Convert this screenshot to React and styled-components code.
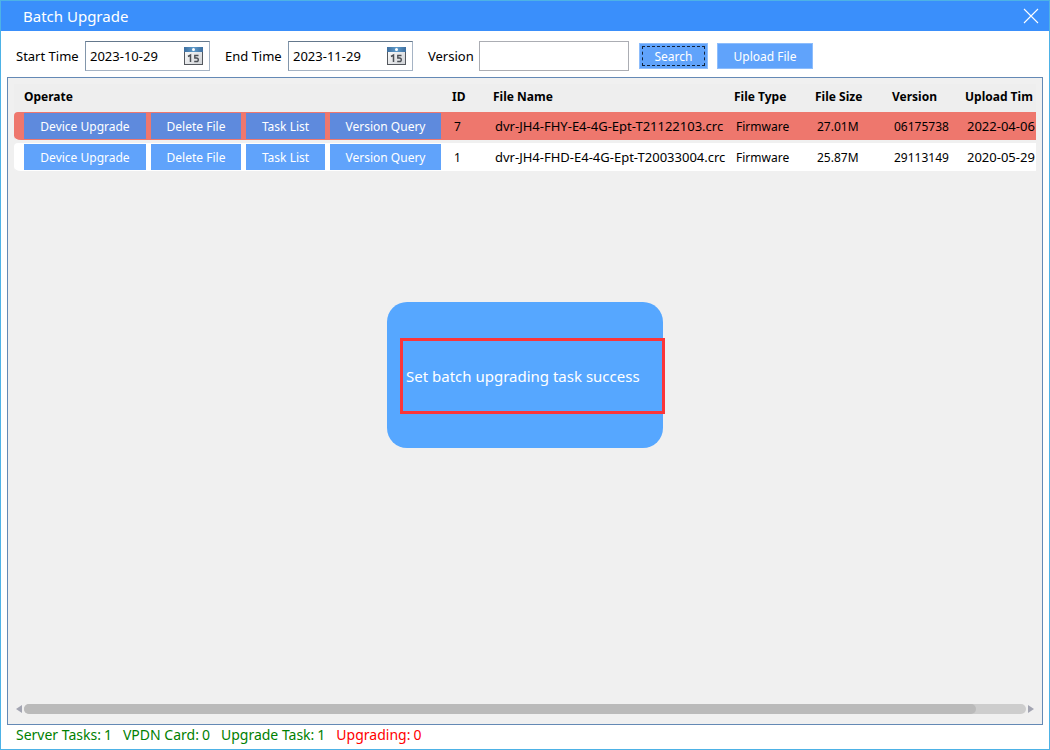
import React from 'react';
import styled, { createGlobalStyle } from 'styled-components';

const FILES = [
  {
    id: 7,
    name: 'dvr-JH4-FHY-E4-4G-Ept-T21122103.crc',
    type: 'Firmware',
    size: '27.01M',
    version: '06175738',
    uploaded: '2022-04-06',
    selected: true,
  },
  {
    id: 1,
    name: 'dvr-JH4-FHD-E4-4G-Ept-T20033004.crc',
    type: 'Firmware',
    size: '25.87M',
    version: '29113149',
    uploaded: '2020-05-29',
  },
];

const ACTIONS = [
  { label: 'Device Upgrade', width: 122 },
  { label: 'Delete File', width: 90 },
  { label: 'Task List', width: 79 },
  { label: 'Version Query', width: 111 },
];

const COLUMNS = [
  { label: 'Operate', width: 432 },
  { label: 'ID', width: 41 },
  { label: 'File Name', width: 241 },
  { label: 'File Type', width: 81 },
  { label: 'File Size', width: 77 },
  { label: 'Version', width: 73 },
  { label: 'Upload Tim', width: 128 },
];

const CalendarIcon = () => (
  <svg width="20" height="20" viewBox="0 0 20 20" aria-hidden="true">
    <defs>
      <linearGradient id="calTop" x1="0" y1="0" x2="1" y2="0">
        <stop offset="0" stopColor="#3f6f9f" />
        <stop offset="0.5" stopColor="#5d9bcb" />
        <stop offset="1" stopColor="#3f6f9f" />
      </linearGradient>
      <linearGradient id="calPage" x1="0" y1="0" x2="1" y2="1">
        <stop offset="0" stopColor="#ffffff" />
        <stop offset="1" stopColor="#cfd2d6" />
      </linearGradient>
    </defs>
    <rect x="0.5" y="1.5" width="18" height="17" fill="url(#calPage)" stroke="#54585e" />
    <rect x="0" y="1" width="19" height="5" fill="url(#calTop)" />
    <circle cx="9.5" cy="3.5" r="1.5" fill="#fff" />
    <path d="M4 10.5L6.5 9V16" fill="none" stroke="#4b4f55" strokeWidth="1.5" />
    <path
      d="M14.5 9.5H10.8V12H12.5Q14.3 12 14.3 13.8T12.5 15.5H10.2"
      fill="none"
      stroke="#4b4f55"
      strokeWidth="1.4"
    />
  </svg>
);

const DateField = ({ id, label, width, value }) => (
  <Field>
    <Label htmlFor={id} $width={width}>
      {label}
    </Label>
    <DateBox>
      <DateInput id={id} type="text" defaultValue={value} />
      <IconButton type="button" aria-label={`Pick ${label}`}>
        <CalendarIcon />
      </IconButton>
    </DateBox>
  </Field>
);

const App = () => (
  <Window>
    <GlobalStyle />
    <TitleBar>
      <Title>Batch Upgrade</Title>
      <IconButton type="button" aria-label="Close">
        <svg width="16" height="16" viewBox="0 0 16 16" aria-hidden="true">
          <path d="M1 1L15 15M15 1L1 15" stroke="#fff" strokeWidth="1.1" />
        </svg>
      </IconButton>
    </TitleBar>

    <Toolbar>
      <DateField id="start" label="Start Time" width={64} value="2023-10-29" />
      <DateField id="end" label="End Time" width={58} value="2023-11-29" />
      <Field>
        <Label htmlFor="version" $width={46}>
          Version
        </Label>
        <TextInput id="version" type="text" />
      </Field>
      <ToolbarButtons>
        <ToolButton type="button" $width={69} $focused>
          Search
        </ToolButton>
        <ToolButton type="button" $width={96}>
          Upload File
        </ToolButton>
      </ToolbarButtons>
    </Toolbar>

    <Panel>
      <TableArea>
        <Table>
          <colgroup>
            {COLUMNS.map(col => (
              <Col key={col.label} $width={col.width} />
            ))}
          </colgroup>
          <thead>
            <tr>
              {COLUMNS.map(col => (
                <HeadCell key={col.label}>{col.label}</HeadCell>
              ))}
            </tr>
          </thead>
          <tbody>
            {FILES.map(file => (
              <Row key={file.id} $selected={file.selected}>
                <Cell>
                  <Actions>
                    {ACTIONS.map(action => (
                      <ActionButton
                        key={action.label}
                        type="button"
                        $width={action.width}
                        $selected={file.selected}
                      >
                        {action.label}
                      </ActionButton>
                    ))}
                  </Actions>
                </Cell>
                <Cell>{file.id}</Cell>
                <Cell $large>{file.name}</Cell>
                <Cell>{file.type}</Cell>
                <Cell>{file.size}</Cell>
                <Cell>{file.version}</Cell>
                <Cell $large>{file.uploaded}</Cell>
              </Row>
            ))}
          </tbody>
        </Table>
      </TableArea>
      <ScrollBar>
        <svg width="6" height="8" viewBox="0 0 6 8" aria-hidden="true">
          <path d="M6 0V8L0 4Z" fill="#a3a5b2" />
        </svg>
        <ScrollTrack>
          <ScrollThumb />
        </ScrollTrack>
        <svg width="6" height="8" viewBox="0 0 6 8" aria-hidden="true">
          <path d="M0 0V8L6 4Z" fill="#a3a5b2" />
        </svg>
      </ScrollBar>
    </Panel>

    <StatusBar>
      <Status>
        <span>Server Tasks:</span>
        <span>1</span>
      </Status>
      <Status>
        <span>VPDN Card:</span>
        <span>0</span>
      </Status>
      <Status>
        <span>Upgrade Task:</span>
        <span>1</span>
      </Status>
      <Status $alert>
        <span>Upgrading:</span>
        <span>0</span>
      </Status>
    </StatusBar>

    <Toast role="status">
      <ToastMessage>Set batch upgrading task success</ToastMessage>
    </Toast>
  </Window>
);

export default App;

const GlobalStyle = createGlobalStyle`
  * {
    box-sizing: border-box;
  }
  body {
    margin: 0;
    font-family: 'Noto Sans', 'Open Sans', sans-serif;
    font-size: 12px;
    color: #000;
  }
  button,
  input {
    font: inherit;
    margin: 0;
  }
`;

const Window = styled.div`
  display: flex;
  flex-direction: column;
  min-height: 100vh;
  border: 1px solid #4db2e6;
  background: #fff;
`;

const TitleBar = styled.header`
  display: flex;
  align-items: center;
  justify-content: space-between;
  height: 30px;
  padding: 0 10px 0 22px;
  background: #3a8ffb;
`;

const Title = styled.h1`
  margin: 0;
  font-size: 15px;
  font-weight: 400;
  color: #fff;
`;

const IconButton = styled.button`
  display: flex;
  padding: 0;
  border: 0;
  background: none;
`;

const Toolbar = styled.div`
  display: flex;
  align-items: center;
  gap: 15px;
  padding: 10px 15px 6px;
`;

const Field = styled.div`
  display: flex;
  align-items: center;
  gap: 5px;
`;

const Label = styled.label`
  width: ${props => props.$width}px;
  font-size: 13px;
  white-space: nowrap;
`;

const DateBox = styled.div`
  display: flex;
  align-items: center;
  width: 125px;
  height: 30px;
  padding: 0 5px 0 4px;
  border: 1px solid;
  border-color: #64788c #a5b3c4 #a5b3c4 #8296ab;
  background: #fff;
`;

const DateInput = styled.input`
  flex: 1;
  min-width: 0;
  padding: 0;
  border: 0;
  outline: 0;
  background: none;
  font-size: 13px;
`;

const TextInput = styled.input`
  width: 150px;
  height: 30px;
  padding: 0 4px;
  border: 1px solid #abadb3;
  outline: 0;
`;

const ToolbarButtons = styled.div`
  display: flex;
  gap: 9px;
  margin-left: -5px;
`;

const Button = styled.button`
  width: ${props => props.$width}px;
  height: 26px;
  padding: 0;
  border: 0;
  color: #fff;
  background: #60a3fb;
  white-space: nowrap;
`;

const ToolButton = styled(Button)`
  border: 1px solid #8dbdfc;
  outline: ${props => (props.$focused ? '1px dashed #12233a' : 'none')};
  outline-offset: -4px;
`;

const ActionButton = styled(Button)`
  background: ${props => (props.$selected ? '#5e8add' : '#60a3fb')};
`;

const Panel = styled.main`
  display: flex;
  flex: 1;
  flex-direction: column;
  justify-content: space-between;
  margin: 0 6px;
  padding: 6px;
  border: 1px solid #6489b5;
  background: #f0f0f0;
`;

const TableArea = styled.div`
  overflow: hidden;
`;

const Table = styled.table`
  width: 1073px;
  table-layout: fixed;
  border-collapse: separate;
  border-spacing: 0;
`;

const Col = styled.col`
  width: ${props => props.$width}px;
`;

const HeadCell = styled.th`
  height: 28px;
  padding: 0 0 3px 6px;
  text-align: left;
  font-weight: 700;
  white-space: nowrap;
  background: #eee;
  &:first-child {
    padding-left: 10px;
  }
`;

const Cell = styled.td`
  height: 31px;
  padding: 1px 0 1px 8px;
  font-size: ${props => (props.$large ? 13 : 12)}px;
  white-space: nowrap;
  border-bottom: 3px solid #f0f0f0;
  &:first-child {
    padding-left: 10px;
    border-radius: 4px 0 0 7px;
  }
`;

const Row = styled.tr`
  ${Cell} {
    background: ${props => (props.$selected ? '#ee776d' : '#fff')};
  }
`;

const Actions = styled.div`
  display: flex;
  gap: 5px;
`;

const ScrollBar = styled.div`
  display: flex;
  align-items: center;
  gap: 2px;
  padding: 0 2px 4px;
`;

const ScrollTrack = styled.div`
  flex: 1;
  height: 10px;
  border-radius: 5px;
  background: #cdcdcd;
`;

const ScrollThumb = styled.div`
  width: 95%;
  height: 10px;
  border-radius: 5px;
  background: #bababa;
`;

const StatusBar = styled.footer`
  display: flex;
  gap: 11px;
  height: 24px;
  padding: 0 15px;
  font-size: 14px;
  line-height: 20px;
`;

const Status = styled.div`
  display: flex;
  gap: 3px;
  color: ${props => (props.$alert ? '#f00' : '#008000')};
`;

const Toast = styled.div`
  position: fixed;
  top: 50%;
  left: 50%;
  transform: translate(-50%, -50%);
  width: 276px;
  height: 146px;
  padding: 36px 0 34px 13px;
  border-radius: 20px;
  background: #56a7ff;
`;

const ToastMessage = styled.p`
  display: flex;
  align-items: center;
  width: 265px;
  height: 76px;
  margin: 0;
  padding-left: 3px;
  border: 3px solid #fb3539;
  font-size: 15px;
  color: #fff;
  white-space: nowrap;
`;
